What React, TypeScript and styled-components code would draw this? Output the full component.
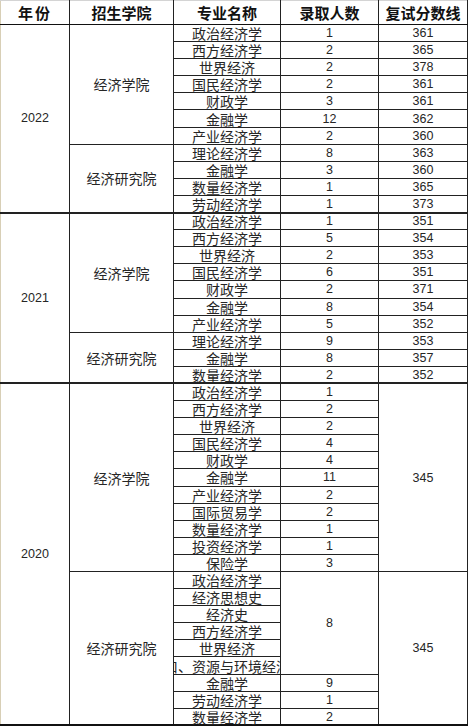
import React from "react";
import styled, { createGlobalStyle } from "styled-components";

const Global = createGlobalStyle`
  html, body { margin: 0; padding: 0; background: #ffffff; }
  body { font-family: "Noto Sans CJK SC", "Noto Sans", sans-serif; }
`;

const Page = styled.div`
  width: 470px;
  height: 728px;
  background: #fff;
  overflow: hidden;
`;

const Table = styled.table`
  border-collapse: collapse;
  table-layout: fixed;
  width: 467px;
  border-top: 1px solid #d4d4d4;
  border-left: 1px solid #d8cfb6;
  border-bottom: 2px solid #111;
  color: #222;
`;

const HeadRow = styled.tr`
  height: 24px;
`;

const Th = styled.th<{ $spaced?: boolean }>`
  padding: 0;
  font-weight: 700;
  font-size: 15px;
  color: #111;
  text-align: center;
  border-right: 1px solid #222;
  border-bottom: 1px solid #111;
  letter-spacing: ${(p) => (p.$spaced ? "2px" : "0")};
  line-height: 22px;
`;

const Row = styled.tr`
  height: 17.1px;
`;

const Td = styled.td<{ $yearTop?: boolean; $kind?: "text" | "num" }>`
  padding: 0;
  text-align: center;
  vertical-align: middle;
  border-right: 1px solid #222;
  border-bottom: 1px solid #222;
  border-top: ${(p) => (p.$yearTop ? "2px solid #222" : "1px solid #222")};
  font-family: ${(p) =>
    p.$kind === "num"
      ? '"Liberation Sans", Arial, sans-serif'
      : '"Noto Sans CJK SC", "Noto Sans", sans-serif'};
  font-size: ${(p) => (p.$kind === "num" ? "12.5px" : "14px")};
  line-height: 14px;
  color: #262626;
  white-space: nowrap;
`;

const Clip = styled.div`
  display: flex;
  justify-content: center;
  align-items: center;
  height: 14px;
  width: 100%;
  overflow-x: clip;
  overflow-y: visible;
  white-space: nowrap;
  line-height: 14px;
`;

const NoShrink = styled.span`
  flex: 0 0 auto;
`;

type Entry = { major: string; count?: number | null; countSpan?: number; score?: number | null };
type College = { name: string; rows: Entry[]; mergedScore?: number };
type Year = { year: string; colleges: College[] };

const data: Year[] = [
  {
    year: "2022",
    colleges: [
      {
        name: "经济学院",
        rows: [
          { major: "政治经济学", count: 1, score: 361 },
          { major: "西方经济学", count: 2, score: 365 },
          { major: "世界经济", count: 2, score: 378 },
          { major: "国民经济学", count: 2, score: 361 },
          { major: "财政学", count: 3, score: 361 },
          { major: "金融学", count: 12, score: 362 },
          { major: "产业经济学", count: 2, score: 360 },
        ],
      },
      {
        name: "经济研究院",
        rows: [
          { major: "理论经济学", count: 8, score: 363 },
          { major: "金融学", count: 3, score: 360 },
          { major: "数量经济学", count: 1, score: 365 },
          { major: "劳动经济学", count: 1, score: 373 },
        ],
      },
    ],
  },
  {
    year: "2021",
    colleges: [
      {
        name: "经济学院",
        rows: [
          { major: "政治经济学", count: 1, score: 351 },
          { major: "西方经济学", count: 5, score: 354 },
          { major: "世界经济", count: 2, score: 353 },
          { major: "国民经济学", count: 6, score: 351 },
          { major: "财政学", count: 2, score: 371 },
          { major: "金融学", count: 8, score: 354 },
          { major: "产业经济学", count: 5, score: 352 },
        ],
      },
      {
        name: "经济研究院",
        rows: [
          { major: "理论经济学", count: 9, score: 353 },
          { major: "金融学", count: 8, score: 357 },
          { major: "数量经济学", count: 2, score: 352 },
        ],
      },
    ],
  },
  {
    year: "2020",
    colleges: [
      {
        name: "经济学院",
        mergedScore: 345,
        rows: [
          { major: "政治经济学", count: 1 },
          { major: "西方经济学", count: 2 },
          { major: "世界经济", count: 2 },
          { major: "国民经济学", count: 4 },
          { major: "财政学", count: 4 },
          { major: "金融学", count: 11 },
          { major: "产业经济学", count: 2 },
          { major: "国际贸易学", count: 2 },
          { major: "数量经济学", count: 1 },
          { major: "投资经济学", count: 1 },
          { major: "保险学", count: 3 },
        ],
      },
      {
        name: "经济研究院",
        mergedScore: 345,
        rows: [
          { major: "政治经济学", count: 8, countSpan: 6 },
          { major: "经济思想史", count: null },
          { major: "经济史", count: null },
          { major: "西方经济学", count: null },
          { major: "世界经济", count: null },
          { major: "人口、资源与环境经济学", count: null },
          { major: "金融学", count: 9 },
          { major: "劳动经济学", count: 1 },
          { major: "数量经济学", count: 2 },
        ],
      },
    ],
  },
];

export default function App() {
  const body: React.ReactNode[] = [];
  data.forEach((y) => {
    const yearRows = y.colleges.reduce((n, c) => n + c.rows.length, 0);
    y.colleges.forEach((c, ci) => {
      c.rows.forEach((r, ri) => {
        const yearTop = ci === 0 && ri === 0 && y.year !== "2022";
        body.push(
          <Row key={`${y.year}-${ci}-${ri}`}>
            {ci === 0 && ri === 0 && (
              <Td rowSpan={yearRows} $yearTop={yearTop} $kind="num">
                {y.year}
              </Td>
            )}
            {ri === 0 && (
              <Td rowSpan={c.rows.length} $yearTop={yearTop}>
                {c.name}
              </Td>
            )}
            <Td $yearTop={yearTop}>
              <Clip>
                <NoShrink>{r.major}</NoShrink>
              </Clip>
            </Td>
            {r.count !== null && r.count !== undefined && (
              <Td rowSpan={r.countSpan ?? 1} $yearTop={yearTop} $kind="num">
                {r.count}
              </Td>
            )}
            {c.mergedScore !== undefined
              ? ri === 0 && (
                  <Td rowSpan={c.rows.length} $yearTop={yearTop} $kind="num">
                    {c.mergedScore}
                  </Td>
                )
              : (
                  <Td $yearTop={yearTop} $kind="num">
                    {r.score}
                  </Td>
                )}
          </Row>
        );
      });
    });
  });

  return (
    <Page>
      <Global />
      <Table>
        <colgroup>
          <col style={{ width: 69 }} />
          <col style={{ width: 104 }} />
          <col style={{ width: 107 }} />
          <col style={{ width: 98 }} />
          <col style={{ width: 89 }} />
        </colgroup>
        <thead>
          <HeadRow>
            <Th $spaced>年份</Th>
            <Th>招生学院</Th>
            <Th>专业名称</Th>
            <Th>录取人数</Th>
            <Th>复试分数线</Th>
          </HeadRow>
        </thead>
        <tbody>{body}</tbody>
      </Table>
    </Page>
  );
}
